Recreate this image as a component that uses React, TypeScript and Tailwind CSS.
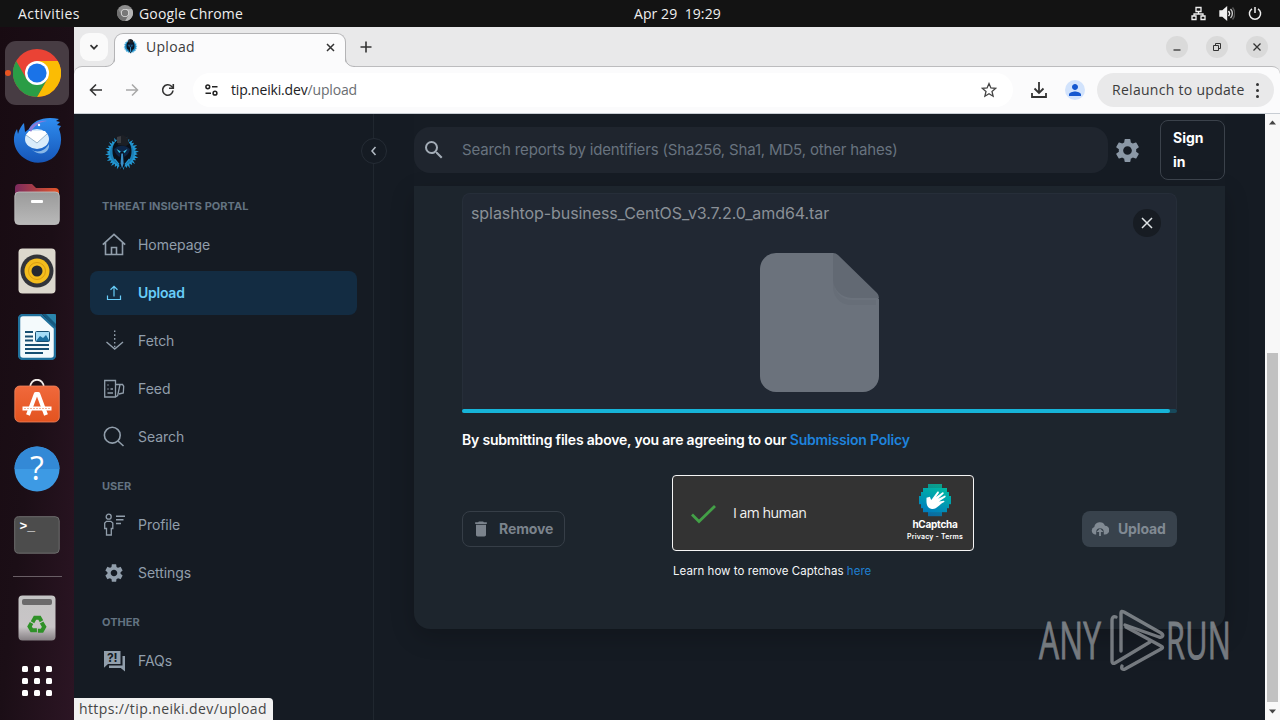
import React from 'react';
import { MdSettings, MdSearch, MdDelete, MdPerson } from 'react-icons/md';

type NavItem = {
  label: string;
  icon: React.ReactNode;
  active?: boolean;
};

type NavSection = {
  title: string;
  items: NavItem[];
};

const HomeIcon = () => (
  <svg width="24" height="24" viewBox="0 0 24 24" fill="none" stroke="currentColor" strokeWidth="1.600">
    <path d="M.8 11.700 12 1.300l11.200 10.400M3.500 9.500v12h17v-12M9.500 21.500v-7h5v7" />
  </svg>
);

const UploadIcon = () => (
  <svg width="24" height="24" viewBox="0 0 24 24" fill="none" stroke="currentColor" strokeWidth="1.200">
    <path d="M12 15.500V5.500M8.500 8.800 12 5.400l3.500 3.400M5.500 14.500v4h13v-4" />
  </svg>
);

const FetchIcon = () => (
  <svg width="24" height="24" viewBox="0 0 24 24" fill="none" stroke="currentColor" strokeWidth="1.400">
    <path d="m4.500 13 8.200 7 8.300-7" />
    <path d="M12.700 1.500v18" strokeDasharray="1.600 2.200" />
  </svg>
);

const FeedIcon = () => (
  <svg width="24" height="24" viewBox="0 0 24 24" fill="none" stroke="currentColor" strokeWidth="1.300">
    <path d="M2.700 3.500h10.800v16.500H2.700zM13.500 7.500h7l1.200 1.800-.4 6.700-4.300 1M13.500 20l2.200-1.500L18 7.500" />
    <path d="M5.500 8h1M5.500 12h1M8.500 12h2.500M5.500 16h5.500" />
  </svg>
);

const SearchIcon = () => (
  <svg width="24" height="24" viewBox="0 0 24 24" fill="none" stroke="currentColor" strokeWidth="1.600">
    <circle cx="10.300" cy="10.200" r="7.900" />
    <path d="m16 16 5.500 5" />
  </svg>
);

const ProfileIcon = () => (
  <svg width="24" height="24" viewBox="0 0 24 24" fill="none" stroke="currentColor" strokeWidth="1.300">
    <circle cx="6.700" cy="3.700" r="2.500" />
    <path d="M4.500 8.300h4.400L10.800 10v5.500H9.300V22H4.500v-6.500H2.700V10z" />
    <path d="M14 3.200h9M14 6.800h7.500M14 10.500h5" strokeWidth="1.500" />
  </svg>
);

const FaqIcon = () => (
  <svg width="24" height="24" viewBox="0 0 24 24" fill="currentColor">
    <path d="M2 2h16.500v13H6l-4 3.800z" />
    <path d="M20.500 7H23v15.500L18.800 19H7v-2.500h13.500z" />
    <text x="10.300" y="13" textAnchor="middle" fontSize="12" fontWeight="700" fontFamily="Inter, sans-serif" fill="#151b23">
      ?!
    </text>
  </svg>
);

const sections: NavSection[] = [
  {
    title: 'THREAT INSIGHTS PORTAL',
    items: [
      { label: 'Homepage', icon: <HomeIcon /> },
      { label: 'Upload', icon: <UploadIcon />, active: true },
      { label: 'Fetch', icon: <FetchIcon /> },
      { label: 'Feed', icon: <FeedIcon /> },
      { label: 'Search', icon: <SearchIcon /> },
    ],
  },
  {
    title: 'USER',
    items: [
      { label: 'Profile', icon: <ProfileIcon /> },
      { label: 'Settings', icon: <MdSettings className="-mt-px" size={22} /> },
    ],
  },
  {
    title: 'OTHER',
    items: [{ label: 'FAQs', icon: <FaqIcon /> }],
  },
];

const spikes = Array.from({ length: 16 }, (_, i) => i * 22.5);

const HelmetLogo = ({ size }: { size: number }) => (
  <svg width={size} height={size} viewBox="0 0 36 36">
    <g fill="#2297d2">
      {spikes.map((a) => (
        <path key={a} d="M14.700 8 16.500 1l1.200 3.500L19.300 2.300 21.300 8z" transform={`rotate(${a} 18 18)`} />
      ))}
    </g>
    <circle cx="18" cy="18" r="12" fill="#1d7fb5" />
    <path d="M18 4c6 0 9.500 5 9.500 12s-3 10.500-6.500 14l-3 5-3-5c-3.500-3.500-6.500-7-6.500-14S12 4 18 4z" fill="#0a101a" />
    <path d="M13 1.500 19 0l5 3 1 6-3 2-8-1z" fill="#1c1f25" />
    <path d="m13 2 4-1v7h-4z" fill="#3b3d42" />
    <path d="M10 14c4.500-4.500 11.500-4.500 16 0-1 5-4 7-5.500 8L19 17h-2l-1.500 5c-1.500-1-4.500-3-5.500-8z" fill="#0d2547" />
    <path d="m12.500 14 4.300 2.500-1.500 1.600zM23.500 14l-4.300 2.500 1.500 1.600z" fill="#35c3e8" />
    <path d="M17.300 18.500h1.700l.6 10-1.500 5-1.500-5z" fill="#3a8fc8" />
    <path d="m10.500 24 4.500 5.500M25.500 24 21 29.500" stroke="#2297d2" strokeWidth="1.300" />
  </svg>
);

const ChromeLogo = ({ size, mono }: { size: number; mono?: boolean }) => (
  <svg width={size} height={size} viewBox="0 0 48 48">
    <circle cx="24" cy="24" r="24" fill={mono ? '#8e8e8e' : '#ea4335'} />
    <path d="M24 12h20.800A24 24 0 0 1 24 48l10.400-18z" fill={mono ? '#b5b5b5' : '#fbbc04'} />
    <path d="M3.200 12A24 24 0 0 0 24 48l10.400-18L24 34 13.600 30z" fill={mono ? '#707070' : '#2a9d46'} />
    <circle cx="24" cy="24" r="12" fill={mono ? '#dedede' : '#fff'} />
    <circle cx="24" cy="24" r="9.600" fill={mono ? '#777' : '#1a73e8'} />
  </svg>
);

const ThunderbirdIcon = () => (
  <svg width="50" height="48" viewBox="0 0 50 48">
    <defs>
      <linearGradient id="bird" x1="0" y1="0" x2="0" y2="1">
        <stop offset="0" stopColor="#2f8df0" />
        <stop offset="1" stopColor="#1656b8" />
      </linearGradient>
    </defs>
    <path d="M17 13C21 4 33 0 47 3l-3 2 4 1-3 3 4 1-2 3c4 10 2 20-4 27-8 8-22 9-31 2C2 35-1 22 5 13l1 5c1-5 4-9 6-11l1 9z" fill="url(#bird)" />
    <ellipse cx="25" cy="23" rx="12" ry="10" fill="#d9ecfb" />
    <path d="m14 19 11 8 10-9-2-3H17z" fill="#fff" />
    <path d="m14 19 11 8 10-9" fill="none" stroke="#9cb8cd" strokeWidth="1" />
    <path d="M17 13c4-6 11-9 18-8-8 1-13 5-16 11z" fill="#8c7bd8" />
    <path d="M19 33c6 5 14 2 18-5 1 8-8 14-18 5z" fill="#b6dcf6" opacity=".7" />
    <circle cx="27" cy="9" r="1.200" fill="#fff" />
  </svg>
);

const FilesIcon = () => (
  <svg width="46" height="42" viewBox="0 0 46 42">
    <defs>
      <linearGradient id="fold">
        <stop offset="0" stopColor="#7b2a5e" />
        <stop offset="1" stopColor="#e2562a" />
      </linearGradient>
      <linearGradient id="fgray" x1="0" y1="0" x2="0" y2="1">
        <stop offset="0" stopColor="#9a9a9a" />
        <stop offset="1" stopColor="#b9b9b9" />
      </linearGradient>
    </defs>
    <path d="M1 5a4 4 0 0 1 4-4h13l4 4h19a4 4 0 0 1 4 4v8H1z" fill="url(#fold)" />
    <rect x=".8" y="9" width="44.500" height="32.500" rx="4" fill="url(#fgray)" stroke="#c4c4c4" strokeWidth=".8" />
    <rect x="17" y="17" width="12" height="3" rx="1" fill="#fff" />
  </svg>
);

const SpeakerIcon = () => (
  <svg width="38" height="46" viewBox="0 0 38 46">
    <rect x=".5" y=".5" width="37" height="45" rx="4" fill="#dcd8cd" />
    <circle cx="19" cy="23" r="16.500" fill="#32343a" />
    <circle cx="19" cy="23" r="12.500" fill="#f4bd1d" />
    <circle cx="19" cy="23" r="8.500" fill="none" stroke="#d99c10" />
    <circle cx="19" cy="23" r="5.500" fill="#252930" />
  </svg>
);

const WriterIcon = () => (
  <svg width="38" height="46" viewBox="0 0 38 46">
    <path d="M5 1h18l14 13v27a4 4 0 0 1-4 4H5a4 4 0 0 1-4-4V5a4 4 0 0 1 4-4z" fill="#f4fafc" stroke="#20709b" strokeWidth="2.500" />
    <path d="M24 0h14v14z" fill="#165a80" />
    <path d="M28 0h8a2 2 0 0 1 2 2v8z" fill="#2b86ad" />
    <path d="M7 18h8M7 22.500h8M7 26.500h8M7 31h24M7 35h24M7 39h18" stroke="#174f72" strokeWidth="1.800" />
    <rect x="17.500" y="17.500" width="14" height="10" rx="1" fill="#a5dcf7" stroke="#174f72" />
    <path d="m18 27 4-5 3 2 3-3 3.500 6z" fill="#1c6fa0" />
  </svg>
);

const StoreIcon = () => (
  <svg width="46" height="44" viewBox="0 0 46 44">
    <defs>
      <linearGradient id="bag" x1="0" y1="0" x2="0" y2="1">
        <stop offset="0" stopColor="#f0693c" />
        <stop offset="1" stopColor="#e3531f" />
      </linearGradient>
    </defs>
    <path d="M16 9c0-11 14-11 14 0" fill="none" stroke="#f2ece9" strokeWidth="1.800" />
    <rect x=".8" y="7" width="44.500" height="36" rx="5" fill="url(#bag)" stroke="#f0875f" strokeWidth=".8" />
    <path d="M14 36 21.800 15h2.400L32 36" fill="none" stroke="#fff" strokeWidth="4" strokeLinejoin="round" />
    <path d="M8.500 29.500h29" stroke="#fff" strokeWidth="4" />
    <path d="M10 29.500h26" stroke="#f0a283" strokeWidth=".8" strokeDasharray="2 1" />
  </svg>
);

const HelpIcon = () => (
  <svg width="46" height="46" viewBox="0 0 46 46">
    <circle cx="23" cy="23" r="22.500" fill="#3d9ae4" />
    <path d="M.5 23a22.500 22.500 0 0 1 45 0z" fill="#3389d6" />
    <text x="23" y="34" textAnchor="middle" fontSize="32" fontFamily="'Open Sans', sans-serif" fill="#fff">
      ?
    </text>
  </svg>
);

const TerminalIcon = () => (
  <svg width="46" height="38" viewBox="0 0 46 38">
    <rect x=".7" y=".7" width="44.500" height="36.500" rx="4" fill="#4c4c4c" stroke="#6d6d6d" />
    <text x="5.500" y="14" fontSize="13" fontWeight="700" fontFamily="'Liberation Mono', monospace" fill="#fff">
      &gt;_
    </text>
  </svg>
);

const TrashIcon = () => (
  <svg width="38" height="46" viewBox="0 0 38 46">
    <defs>
      <linearGradient id="can" x1="0" y1="0" x2="0" y2="1">
        <stop offset="0" stopColor="#c4c4c4" />
        <stop offset=".7" stopColor="#c9c5c7" />
        <stop offset="1" stopColor="#857f83" />
      </linearGradient>
    </defs>
    <rect x=".5" y=".5" width="37" height="45" rx="4" fill="url(#can)" />
    <rect x="4" y="4" width="30" height="6" rx="2" fill="#6b6a6b" />
    <g fill="none" stroke="#2f9128" strokeWidth="4">
      {[0, 120, 240].map((a) => (
        <path key={a} d="M14.500 26.500 17 22h4.500l2 3.500" transform={`rotate(${a} 19 30) translate(0 .8)`} />
      ))}
    </g>
  </svg>
);

const Dock = () => (
  <aside className="relative flex w-[74px] shrink-0 flex-col items-center bg-gradient-to-br from-[#180b12] via-[#1b0e16] to-[#2c1524] pt-[14px]">
    <div className="absolute left-[5px] top-[43px] h-[6px] w-[6px] rounded-full bg-[#e95420]" />
    <div className="flex h-[64px] w-[64px] items-center justify-center rounded-[11px] bg-[#473c43]">
      <ChromeLogo size={48} />
    </div>
    <div className="mt-[11px] flex h-[48px] items-center"><ThunderbirdIcon /></div>
    <div className="mt-[19px] flex h-[42px] items-center"><FilesIcon /></div>
    <div className="mt-[23px] flex h-[46px] items-center"><SpeakerIcon /></div>
    <div className="mt-[20px] flex h-[46px] items-center"><WriterIcon /></div>
    <div className="mt-[19px] flex h-[44px] items-center"><StoreIcon /></div>
    <div className="mt-[23px] flex h-[46px] items-center"><HelpIcon /></div>
    <div className="mt-[24px] flex h-[38px] items-center"><TerminalIcon /></div>
    <div className="mt-[22px] h-px w-[49px] bg-[#695e65]" />
    <div className="mt-[18px] flex h-[46px] items-center"><TrashIcon /></div>
    <div className="mt-[25px] grid grid-cols-3 gap-[6px]">
      {Array.from({ length: 9 }, (_, i) => (
        <span key={i} className="h-[6px] w-[6px] rounded-[1.500px] bg-white" />
      ))}
    </div>
  </aside>
);

const SystemBar = () => (
  <header className="flex h-[27px] shrink-0 items-center bg-[#131313] pb-px text-[14px] text-[#eeeeee]">
    <div className="flex w-[634px] items-center pl-[18px]">
      <span className="w-[99px] tracking-[0.420px]">Activities</span>
      <ChromeLogo size={16} mono />
      <span className="ml-[6px] tracking-[0.150px]">Google Chrome</span>
    </div>
    <div className="w-[90px] whitespace-pre tracking-[0.080px]">
      Apr 29&nbsp; 19:29
    </div>
    <div className="flex flex-1 items-center justify-end gap-[13px] pr-[18px]">
      <svg width="15" height="15" viewBox="0 0 15 15" fill="none" stroke="#f0f0f0" strokeWidth="1.300">
        <path d="M5 1.500h5v4H5zM1 10h4v3.500H1zM10 10h4v3.500h-4zM7.500 5.500v2.500M3 10V8h9v2" />
      </svg>
      <svg width="16" height="15" viewBox="0 0 16 15" fill="none" stroke="#f0f0f0" strokeWidth="1.400">
        <path d="M1 5h2.500L7.500 1.500v12L3.500 10H1z" fill="#f0f0f0" />
        <path d="M9.500 5c1.300 1.500 1.300 3.500 0 5" />
        <path d="M11.500 3c2.500 2.500 2.500 6.500 0 9" stroke="#ccc" />
        <path d="M13.500 1.500c3 3.500 3 8.500 0 12" stroke="#555" />
      </svg>
      <svg width="14" height="15" viewBox="0 0 14 15" fill="none" stroke="#f0f0f0" strokeWidth="1.500">
        <path d="M4 2.800a5.600 5.600 0 1 0 6 0M7 1v6" />
      </svg>
    </div>
  </header>
);

const WindowButton = ({ children }: { children: React.ReactNode }) => (
  <div className="flex h-[22px] w-[22px] items-center justify-center rounded-full bg-[#dadada]">
    <svg width="12" height="12" viewBox="0 0 12 12" fill="none" stroke="#333" strokeWidth="1.300">
      {children}
    </svg>
  </div>
);

const TabStrip = () => (
  <div className="flex h-[39px] shrink-0 bg-[#e9e9ea]">
    <div className="ml-[6px] mt-[6px] flex h-[28px] w-[28px] items-center justify-center rounded-[9px] bg-[#fafafa]">
      <svg width="10" height="10" viewBox="0 0 10 10" fill="none" stroke="#333" strokeWidth="1.700">
        <path d="m1.500 3.200 3.500 3.500 3.500-3.500" />
      </svg>
    </div>
    <div className="relative ml-[6px] mt-[6px] flex h-[34px] w-[232px] items-center rounded-t-[9px] border border-b-0 border-[#b4b4b6] bg-[#fbfbfc] pl-[8px]">
      <svg className="absolute -left-[10px] bottom-0" width="11" height="10" viewBox="0 0 11 10">
        <path d="M11 0h-.5C10.500 6 7 9.500 0 9.500V10h11z" fill="#fbfbfc" />
        <path d="M9.500 0c0 6-3 9.500-9.500 9.500" fill="none" stroke="#b4b4b6" />
      </svg>
      <svg className="absolute -right-[10px] bottom-0" width="11" height="10" viewBox="0 0 11 10">
        <path d="M0 0h.5C.5 6 4 9.500 11 9.500V10H0z" fill="#fbfbfc" />
        <path d="M1.500 0c0 6 3 9.500 9.500 9.500" fill="none" stroke="#b4b4b6" />
      </svg>
      <span className="mb-[8px]"><HelmetLogo size={15} /></span>
      <span className="mb-[9px] ml-[8px] flex-1 text-[14px] tracking-[0.300px] text-[#3c3c3c]">Upload</span>
      <svg className="mb-[7px] mr-[10px]" width="9" height="9" viewBox="0 0 9 9" stroke="#333" strokeWidth="1.500">
        <path d="m1 1 7 7M8 1 1 8" />
      </svg>
    </div>
    <svg className="ml-[14px] mt-[14px]" width="12" height="12" viewBox="0 0 12 12" stroke="#333" strokeWidth="1.600">
      <path d="M6 .5v11M.5 6h11" />
    </svg>
    <div className="ml-auto flex gap-[18px] pr-[12px] pt-[9px]">
      <WindowButton><path d="M2.500 9h7" /></WindowButton>
      <WindowButton><path d="M2.500 4.500h5v5h-5zM4.500 4.500v-2h5v5h-2" strokeWidth="1" /></WindowButton>
      <WindowButton><path d="m2.500 2.500 7 7M9.500 2.500l-7 7" /></WindowButton>
    </div>
  </div>
);

const Toolbar = () => (
  <div className="flex h-[48px] shrink-0 items-center rounded-t-[8px] border-b border-t border-b-[#c8cdd3] border-t-[#bcbcbe] bg-[#fbfbfc] pl-[15px] pr-[6px]">
    <svg width="14" height="14" viewBox="0 0 14 14" fill="none" stroke="#333" strokeWidth="1.600">
      <path d="M13 7H2M7 1.500 1.500 7 7 12.500" />
    </svg>
    <svg className="ml-[22px]" width="14" height="14" viewBox="0 0 14 14" fill="none" stroke="#a8a8a8" strokeWidth="1.500">
      <path d="M1 7h11M7 1.500 12.500 7 7 12.500" />
    </svg>
    <svg className="ml-[22px]" width="14" height="14" viewBox="0 0 14 14" fill="none" stroke="#333" strokeWidth="1.600">
      <path d="M12 7.500A5.200 5.200 0 1 1 10.500 3.300l1.500 1.500" />
      <path d="M12.300 1v4.300H8" />
    </svg>
    <div className="ml-[18px] flex h-[34px] w-[820px] items-center rounded-full bg-white pl-[12px] pr-[16px]">
      <svg width="13" height="12" viewBox="0 0 13 12" fill="none" stroke="#222" strokeWidth="1.500">
        <circle cx="2.800" cy="2.800" r="1.900" />
        <path d="M7 2.800h5.500M.5 9.200H6" />
        <circle cx="10" cy="9.200" r="1.900" />
      </svg>
      <span className="mb-[2px] ml-[13px] text-[14px] tracking-[-0.170px] text-[#202124]">
        tip.neiki.dev<span className="text-[#6b6e72]">/upload</span>
      </span>
      <svg className="ml-auto" width="16" height="16" viewBox="0 0 16 16" fill="none" stroke="#444" strokeWidth="1.300">
        <path d="m8 1.600 1.900 4.400 4.700.4-3.600 3.100 1.100 4.700L8 11.700l-4.100 2.500L5 9.500 1.400 6.400 6.100 6z" />
      </svg>
    </div>
    <svg className="ml-[18px]" width="16" height="16" viewBox="0 0 16 16" fill="none" stroke="#333" strokeWidth="1.800">
      <path d="M8 0v10.500M3.500 6.500 8 11l4.500-4.500M1 11v4h14v-4" />
    </svg>
    <div className="ml-[18px] flex h-[20px] w-[20px] items-center justify-center rounded-full bg-[#d2e3fc]">
      <MdPerson size={18} color="#1558d0" />
    </div>
    <div className="ml-auto flex h-[34px] w-[177px] items-center rounded-full bg-[#e9e9ea] pl-[15px] text-[14px] text-[#3c3c3c]">
      <span className="mb-[2px] whitespace-nowrap tracking-[0.290px]">Relaunch to update</span>
      <span className="ml-auto mr-[15px] flex flex-col gap-[3px]">
        <i className="h-[3px] w-[3px] rounded-full bg-[#333]" />
        <i className="h-[3px] w-[3px] rounded-full bg-[#333]" />
        <i className="h-[3px] w-[3px] rounded-full bg-[#333]" />
      </span>
    </div>
  </div>
);

const Sidebar = () => (
  <nav className="relative w-[300px] shrink-0 border-r border-[#20272f] px-[16px] pt-[21px]">
    <div className="mb-[12px] ml-[14px] h-[36px]">
      <HelmetLogo size={36} />
    </div>
    {sections.map((section) => (
      <div key={section.title} className="first-of-type:pt-0">
        <div className="h-[40px] pl-[12px] pt-[15px] text-[11px] font-bold leading-[17.500px] tracking-[0.040px] text-[#637381]">
          {section.title}
        </div>
        {section.items.map((item) => (
          <div
            key={item.label}
            className={
              item.active
                ? 'mb-[4px] flex h-[44px] w-[267px] items-center rounded-[8px] bg-[#132c42] pl-[12px] text-[14px] font-semibold tracking-[-0.250px] text-[#68cdf9]'
                : 'mb-[4px] flex h-[44px] w-[267px] items-center rounded-[8px] pl-[12px] text-[14px] tracking-[-0.050px] text-[#919eab]'
            }
          >
            <span className="mr-[12px] flex h-[24px] w-[24px] items-center justify-center">{item.icon}</span>
            <span className="mb-[2px]">{item.label}</span>
          </div>
        ))}
      </div>
    ))}
    <div className="absolute -right-[14px] top-[24px] flex h-[26px] w-[26px] items-center justify-center rounded-full border border-[#252c35] bg-[#151b23]">
      <svg width="8" height="10" viewBox="0 0 8 10" fill="none" stroke="#b4bcc5" strokeWidth="1.500">
        <path d="M5.500 1 2 5l3.500 4" />
      </svg>
    </div>
  </nav>
);

const PageHeader = () => (
  <div className="flex h-[72px] shrink-0 items-center bg-[#161c24]">
    <div className="flex h-[46px] w-[694px] items-center rounded-[16px] bg-[#1f252e] pl-[8px]">
      <MdSearch size={24} color="#a3acb6" />
      <span className="ml-[16px] text-[15px] tracking-[-0.160px] text-[#68737f]">
        Search reports by identifiers (Sha256, Sha1, MD5, other hahes)
      </span>
    </div>
    <MdSettings className="ml-[5px]" size={29} color="#8b98a6" />
    <div className="ml-auto flex h-[60px] w-[65px] items-center rounded-[8px] border border-[#3b424b] pl-[12px] text-[14px] font-bold leading-[24px] text-white">
      <span className="w-[34px]">Sign in</span>
    </div>
  </div>
);

// column extents of the pixelated disc, one entry per 4px row
const discRows = [
  [10, 14],
  [5, 24],
  [3, 28],
  [1, 32],
  [1, 32],
  [3, 28],
  [5, 24],
  [10, 14],
];

const Captcha = () => (
  <div className="w-[302px]">
    <div className="flex h-[76px] items-center rounded-[4px] border border-[#f5f5f5] bg-[#333333] pl-[17px] pr-[10px]">
      <svg className="mt-px" width="28" height="24" viewBox="0 0 28 24" fill="none" stroke="#43a047" strokeWidth="2.800">
        <path d="m2 12.500 7 7L25 4" />
      </svg>
      <span className="mb-px ml-[15px] font-['Open_Sans',sans-serif] text-[14px] tracking-[-0.500px] text-[#f2f2f2]">I am human</span>
      <div className="ml-auto flex flex-col items-center">
        <svg width="34" height="33" viewBox="0 0 34 33">
          <defs>
            <linearGradient id="hcap" gradientUnits="userSpaceOnUse" x1="24" y1="0" x2="12" y2="32">
              <stop offset="0" stopColor="#00bfa0" />
              <stop offset="1" stopColor="#0078c0" />
            </linearGradient>
          </defs>
          {discRows.map(([x, w], i) => (
            <rect key={i} x={x} y={i * 4} width={w} height="4.200" fill="url(#hcap)" opacity={i === 0 || i === 7 ? 0.8 : 1} />
          ))}
          <g transform="rotate(14 17 17)">
            <path d="M8 16l3-2 2 3 .5-1L17 7.500c1-1 2 0 1.700 1L17 13l5-6c1-.8 2 0 1.500 1l-4 6 5.500-4.500c1-.5 1.600.5 1 1.300L21 16.500l4.500-2c1 0 1 1 .3 1.600-4 3-5 9.400-10.800 9.400-5 0-6-5-7-9.500z" fill="#fff" />
          </g>
        </svg>
        <span className="text-[10px] font-bold leading-[14px] tracking-[-0.250px] text-white">hCaptcha</span>
        <span className="whitespace-nowrap text-[7px] font-semibold leading-[12px] tracking-[0.180px] text-white">Privacy - Terms</span>
      </div>
    </div>
    <p className="mt-[11px] pl-px font-[Inter,sans-serif] text-[11.500px] leading-[18px] tracking-[0.040px] text-[#f4f6f8]">
      Learn how to remove Captchas <span className="text-[#1f7fd0]">here</span>
    </p>
  </div>
);

const UploadCard = () => (
  <section className="h-[443px] rounded-b-[16px] bg-[#1d252d] px-[48px] pt-[7px] shadow-[0_8px_24px_rgba(0,0,0,0.200)]">
    <div className="relative h-[216px] rounded-t-[8px] border border-b-0 border-[#262e39] bg-[#212833] px-[8px] pt-[7px]">
      <p className="text-[16px] leading-[24px] tracking-[-0.080px] text-[#8a9097]">
        splashtop-business_CentOS_v3.7.2.0_amd64.tar
      </p>
      <div className="absolute right-[15px] top-[15px] flex h-[28px] w-[28px] items-center justify-center rounded-full bg-[#171c23]">
        <svg width="12" height="12" viewBox="0 0 12 12" stroke="#dfe3e6" strokeWidth="1.500">
          <path d="m1 1 10 10M11 1 1 11" />
        </svg>
      </div>
      <div className="mt-[28px] flex justify-center">
        <svg width="119" height="139" viewBox="0 0 119 139">
          <path d="M16 0h57l46 46v77a16 16 0 0 1-16 16H16a16 16 0 0 1-16-16V16A16 16 0 0 1 16 0z" fill="#6b727c" />
          <path d="M74 4v25a18 18 0 0 0 18 18h24v5H90a18 18 0 0 1-17-18z" fill="#676e78" />
          <path d="M73 0q3 0 5 2l39 38q2 2 2 5H92A19 19 0 0 1 73 26z" fill="#626973" />
        </svg>
      </div>
    </div>
    <div className="h-[4px] rounded-full bg-[#17495b]">
      <div className="h-full w-[708px] rounded-full bg-[#16b4d8]" />
    </div>
    <p className="mt-[16px] text-[14px] font-semibold leading-[22px] tracking-[-0.190px] text-white">
      By submitting files above, you are agreeing to our <span className="text-[#1f83dc]">Submission Policy</span>
    </p>
    <div className="mt-[24px] flex justify-between">
      <div className="mt-[36px] flex h-[36px] w-[103px] items-center rounded-[8px] border border-[#363e47] pl-[8px] text-[14px] font-bold tracking-[-0.100px] text-[#7b838c]">
        <MdDelete size={20} />
        <span className="mb-[2px] ml-[8px]">Remove</span>
      </div>
      <div className="mr-[1px]"><Captcha /></div>
      <div className="mt-[36px] flex h-[36px] w-[95px] items-center rounded-[8px] bg-[#38424c] pl-[9px] text-[14px] font-bold tracking-[-0.150px] text-[#818a93]">
        <svg width="18" height="16" viewBox="0 0 18 16" fill="currentColor">
          <path d="M5.200 13.500H4A3.900 3.900 0 0 1 3.300 6 5.600 5.600 0 0 1 14 4.700 4.400 4.400 0 0 1 13.800 13.500h-1V11a3.800 3.800 0 0 0-7.600 0z" />
          <path d="M9 7.500 5.500 11h2.600v4h1.800v-4h2.600z" />
        </svg>
        <span className="mb-[2px] ml-[9px]">Upload</span>
      </div>
    </div>
  </section>
);

const Watermark = () => (
  <svg className="absolute bottom-[28px] right-[28px] opacity-60" width="204" height="88" viewBox="-4 -4 204 88">
    <g fill="#b5b9bd" fontFamily="'Open Sans', sans-serif" fontSize="51" stroke="#b5b9bd" strokeWidth="1">
      <text x="0" y="51" transform="translate(2 0) scale(.62 1)" textLength="100">ANY</text>
      <text x="0" y="51" transform="translate(129 0) scale(.6 1)" textLength="108">RUN</text>
    </g>
    <g fill="none" stroke="#b5b9bd" strokeWidth="3.400" strokeLinecap="round" strokeLinejoin="round">
      <path d="M79 9c-3-1-4 1-4 3v41c0 2 1 3 3 2l35-21" />
      <path d="M84 43V5c0-2 1-2 3-1l37 21c3 2 2 5-2 4L88 17" />
      <path d="M89 19l35 19c2 1 2 2 0 3L88 61c-2 1-4 0-3-3" />
    </g>
  </svg>
);

const Scrollbar = () => (
  <div className="flex w-[15px] shrink-0 flex-col items-center bg-[#f8f8f8]">
    <svg className="mt-[6px]" width="7" height="5" viewBox="0 0 7 5"><path d="M3.500.5 7 4.500H0z" fill="#444" /></svg>
    <div className="mt-[228px] h-[349px] w-[11px] bg-[#c1c1c1]" />
    <svg className="mt-[7px]" width="7" height="5" viewBox="0 0 7 5"><path d="M3.500 4.500 0 .5h7z" fill="#444" /></svg>
  </div>
);

export default function App() {
  return (
    <div className="relative flex h-[720px] w-[1280px] flex-col overflow-hidden bg-[#161c24] font-['Open_Sans','Noto_Sans',sans-serif]">
      <SystemBar />
      <div className="flex min-h-0 flex-1">
        <Dock />
        <div className="relative flex min-w-0 flex-1 flex-col bg-[#e9e9ea]">
          <TabStrip />
          <Toolbar />
          <div className="flex min-h-0 flex-1">
            <div className="relative flex min-w-0 flex-1 overflow-hidden bg-[#151b23] font-[Inter,sans-serif]">
              <Sidebar />
              <main className="flex-1 px-[40px]">
                <PageHeader />
                <UploadCard />
              </main>
              <Watermark />
            </div>
            <Scrollbar />
          </div>
          <div className="absolute bottom-0 left-0 flex h-[22px] w-[199px] items-center rounded-tr-[4px] bg-[#f1f1f1] pb-px pl-[5px] text-[14px] tracking-[0.390px] text-[#454545]">
            https://tip.neiki.dev/upload
          </div>
        </div>
      </div>
    </div>
  );
}
